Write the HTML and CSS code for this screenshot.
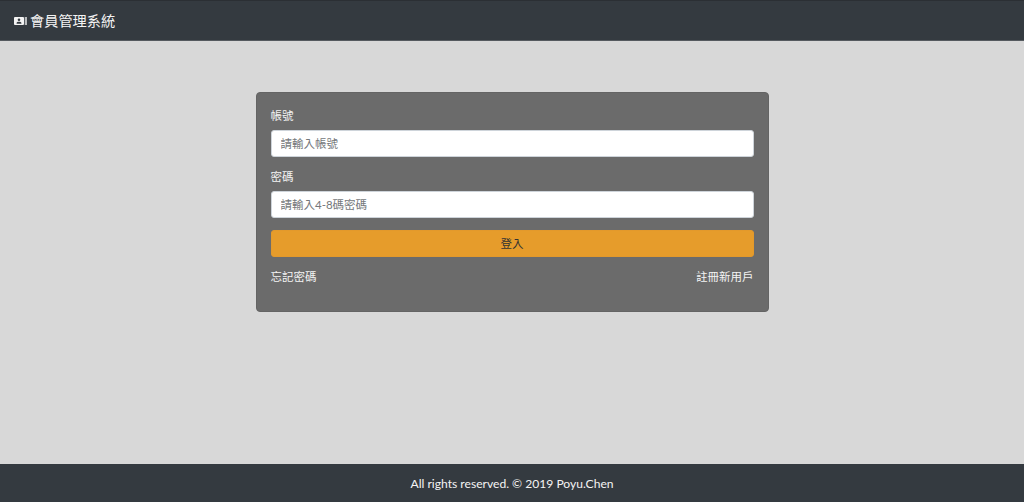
FILE: index.html
```html
<!DOCTYPE html>
<html lang="zh-Hant">

<head>
    <meta charset="UTF-8">
    <meta name="viewport" content="width=device-width, initial-scale=1.0">
    <title>會員管理系統</title>
    <link rel="stylesheet" href="styles.css">
</head>

<body>
    <nav class="navbar">
        <a class="navbar-brand" href="#">
            <svg class="brand-icon" viewBox="0 0 13 8" width="13" height="8" aria-hidden="true">
                <path fill-rule="evenodd" d="M1 0h8a1 1 0 0 1 1 1v6a1 1 0 0 1-1 1H1a1 1 0 0 1-1-1V1a1 1 0 0 1 1-1zM5 1.400a1.300 1.300 0 1 0 0 2.600a1.300 1.300 0 0 0 0-2.600zM2.600 6.800h4.800V6c0-.7-1-1.200-2.400-1.200s-2.400.5-2.400 1.200z" />
                <rect x="10.800" y="0" width="0.900" height="8" />
                <rect x="12.300" y="0" width="0.700" height="8" />
            </svg>
            <span class="brand-text">會員管理系統</span>
        </a>
    </nav>

    <main class="content">
        <form class="login-card">
            <div class="form-group">
                <label class="form-label" for="account">帳號</label>
                <input class="form-input" id="account" type="text" placeholder="請輸入帳號">
            </div>
            <div class="form-group">
                <label class="form-label" for="password">密碼</label>
                <input class="form-input" id="password" type="password" placeholder="請輸入4-8碼密碼">
            </div>
            <button class="login-btn" type="button">登入</button>
            <div class="login-links">
                <a href="#">忘記密碼</a>
                <a href="#">註冊新用戶</a>
            </div>
        </form>
    </main>

    <footer class="footer">All rights reserved. © 2019 Poyu.Chen</footer>
</body>

</html>
```
FILE: styles.css
```css
* {
    box-sizing: border-box;
}

html,
body {
    height: 100%;
}

body {
    margin: 0;
    display: flex;
    flex-direction: column;
    background-color: #d8d8d8;
    font-family: "Lato", "Noto Sans CJK TC", sans-serif;
    font-size: 11.500px;
    color: #f4f4f4;
}

a {
    color: #f4f4f4;
    text-decoration: none;
}

.navbar {
    height: 41px;
    flex-shrink: 0;
    display: flex;
    align-items: center;
    padding: 1px 14px 0;
    background-color: #343a40;
    border-top: 1px solid #2b2f34;
    border-bottom: 1px solid #555a5f;
}

.navbar-brand {
    display: flex;
    align-items: center;
    gap: 3px;
    font-size: 14.200px;
}

.brand-icon {
    fill: #f4f4f4;
}

.brand-text {
    line-height: 18px;
}

.content {
    flex: 1;
    display: flex;
    justify-content: center;
    align-items: flex-start;
    padding-top: 51px;
}

.login-card {
    width: 513px;
    height: 220px;
    padding: 14px;
    background-color: #6b6b6b;
    border: 1px solid #646464;
    border-radius: 4px;
}

.form-group {
    margin-bottom: 11px;
}

.form-label {
    display: block;
    height: 23px;
    line-height: 17px;
}

.form-input {
    display: block;
    width: 100%;
    height: 27px;
    padding: 0 9px;
    background-color: #fff;
    border: 1px solid #ced4da;
    border-radius: 3px;
    font-family: inherit;
    font-size: 11.500px;
}

.form-input::placeholder {
    color: #74777a;
}

.login-btn {
    display: block;
    width: 100%;
    height: 27px;
    margin-top: 12px;
    padding: 0 0 2px;
    background-color: #e69c2b;
    border: 1px solid #e3992b;
    border-radius: 3px;
    font-family: inherit;
    font-size: 11.500px;
    color: #333;
}

.login-links {
    display: flex;
    justify-content: space-between;
    margin-top: 12px;
    line-height: 16px;
}

.footer {
    height: 38px;
    flex-shrink: 0;
    display: flex;
    align-items: center;
    justify-content: center;
    padding-top: 1px;
    background-color: #343a40;
    font-size: 12.100px;
}
```
